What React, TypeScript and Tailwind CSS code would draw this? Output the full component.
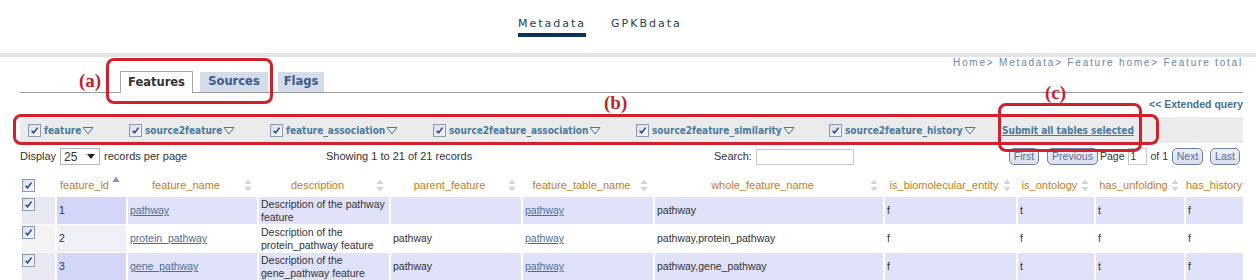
import React from "react";

const Check = () => (
  <span className="inline-flex h-[13px] w-[13px] shrink-0 items-center justify-center border border-[#8d9ab2] bg-linear-to-br from-[#d6ddec] to-[#f8f9fc]">
    <svg viewBox="0 0 10 10" className="h-[9px] w-[9px]">
      <path d="M1.8 5.2 L4 7.6 L8.4 1.8" fill="none" stroke="#23417a" strokeWidth="1.7" />
    </svg>
  </span>
);

const Tri = () => (
  <svg viewBox="0 0 12 9" className="ml-[1px] h-[9px] w-[12px]">
    <path d="M1 1.5 H11 L6 8 Z" fill="none" stroke="#4a7a9a" strokeWidth="1" />
  </svg>
);

const SortBoth = () => (
  <svg viewBox="0 0 8 13" className="h-[13px] w-[8px]">
    <path d="M4 0.5 L7.5 5 H0.5 Z" fill="#d3d4d9" />
    <path d="M4 12.5 L7.5 8 H0.5 Z" fill="#d3d4d9" />
  </svg>
);

const SortUp = () => (
  <svg viewBox="0 0 8 13" className="h-[13px] w-[8px]">
    <path d="M4 0.5 L7.5 6 H0.5 Z" fill="#8a90d6" />
  </svg>
);

const tables = [
  "feature",
  "source2feature",
  "feature_association",
  "source2feature_association",
  "source2feature_similarity",
  "source2feature_history",
];

const cols =
  "grid grid-cols-[33px_69px_129px_130px_130px_130px_228px_131px_76px_88px_57px] gap-x-[2px]";

const headers = [
  "feature_name",
  "description",
  "parent_feature",
  "feature_table_name",
  "whole_feature_name",
  "is_biomolecular_entity",
  "is_ontology",
  "has_unfolding",
];

const rows = [
  { id: 1, name: "pathway", desc: ["Description of the pathway", "feature"], parent: "", whole: "pathway", v: ["f", "t", "t", "f"] },
  { id: 2, name: "protein_pathway", desc: ["Description of the", "protein_pathway feature"], parent: "pathway", whole: "pathway,protein_pathway", v: ["f", "f", "f", "f"] },
  { id: 3, name: "gene_pathway", desc: ["Description of the", "gene_pathway feature"], parent: "pathway", whole: "pathway,gene_pathway", v: ["f", "t", "t", "f"] },
];

const Btn = ({ children, w }: { children: React.ReactNode; w: string }) => (
  <span className={`flex h-[17px] shrink-0 items-center justify-center rounded-[5px] border border-[#6f80a6] bg-linear-to-b from-[#eef1f8] to-[#d9dfee] text-[#5c6d95] ${w}`}>
    {children}
  </span>
);

export default function App() {
  return (
    <div className="relative h-[280px] w-[1260px] overflow-hidden bg-white font-['Liberation_Sans',Arial,sans-serif] text-[#333]">
      {/* top nav */}
      <div className="flex h-[53px] gap-[25px] pl-[518px] pt-[17px] font-['DejaVu_Sans',sans-serif] text-[11px] leading-[14px] tracking-[2px] text-[#22405f]">
        <div className="flex flex-col">
          <span>Metadata</span>
          <span className="mt-[2px] h-[4px] w-full bg-[#0f3358]" />
        </div>
        <span>GPKBdata</span>
      </div>
      <div className="h-[4px] w-[1256px] bg-[#e5e5e5]" />

      <div className="ml-[20px] w-[1223px]">
        <div className="text-right text-[10px] leading-[12px] tracking-[1.8px] text-[#6688a8]">
          Home&gt; Metadata&gt; Feature home&gt; Feature total
        </div>

        {/* tabs */}
        <div className="mt-[2px] flex h-[22px] items-end border-b border-[#9a9a9a] pl-[100px] font-['DejaVu_Sans',sans-serif] text-[11.5px] font-bold">
          <span className="-mb-px flex h-[22px] w-[73px] items-center justify-center border border-b-0 border-[#aaa] bg-white text-[#333]">
            Features
          </span>
          <span className="ml-[7px] flex h-[20px] w-[68px] items-center justify-center bg-[#d4dbe9] text-[#3b5a8e]">
            Sources
          </span>
          <span className="ml-[10px] flex h-[20px] w-[46px] items-center justify-center bg-[#d4dbe9] text-[#3b5a8e]">
            Flags
          </span>
        </div>

        <div className="flex h-[24px] items-center justify-end text-[10.5px] font-bold text-[#4b7090]">
          &lt;&lt; Extended query
        </div>

        {/* table selection band */}
        <div className="grid h-[26px] grid-cols-[101px_141px_163px_203px_193px_173px_auto] items-center bg-[#ebebeb] pl-[8px] font-['DejaVu_Sans_Condensed','DejaVu_Sans',sans-serif] text-[10px] font-bold text-[#4a7a9a]">
          {tables.map((t) => (
            <div key={t} className="flex items-center">
              <Check />
              <span className="ml-[3px]">{t}</span>
              <Tri />
            </div>
          ))}
          <span className="underline">Submit all tables selected</span>
        </div>

        {/* display row */}
        <div className="mt-[4px] flex h-[19px] items-center whitespace-nowrap text-[11px]">
          <div className="flex w-[306px] items-center">
            <span>Display</span>
            <span className="ml-[4px] flex h-[17px] w-[40px] items-center justify-between border border-[#b5b5b5] pl-[3px] pr-[4px] text-[12px]">
              25
              <svg viewBox="0 0 8 5" className="h-[5px] w-[8px]">
                <path d="M0 0 H8 L4 5 Z" fill="#222" />
              </svg>
            </span>
            <span className="ml-[4px]">records per page</span>
          </div>
          <div className="w-[388px]">Showing 1 to 21 of 21 records</div>
          <div className="flex w-[295px] items-center">
            <span>Search:</span>
            <span className="ml-[4px] h-[16px] w-[98px] border border-[#c8c8c8]" />
          </div>
          <div className="flex items-center text-[10.5px]">
            <Btn w="w-[30px]">First</Btn>
            <span className="ml-[8px]">
              <Btn w="w-[51px]">Previous</Btn>
            </span>
            <span className="ml-[2px]">Page</span>
            <span className="ml-[3px] h-[17px] w-[19px] border border-[#c8c8c8] pl-[2px] text-[10px] leading-[15px]">1</span>
            <span className="ml-[4px]">of 1</span>
            <span className="ml-[4px]">
              <Btn w="w-[31px]">Next</Btn>
            </span>
            <span className="ml-[7px]">
              <Btn w="w-[30px]">Last</Btn>
            </span>
          </div>
        </div>

        {/* table */}
        <div className="mt-[9px] pl-[2px]">
          <div className={`${cols} h-[20px] items-center text-[11px] text-[#c47d1f]`}>
            <div className="flex items-center">
              <Check />
            </div>
            <div className="flex items-center">
              <span className="flex-1 text-center">feature_id</span>
              <span className="-mt-[5px] mr-[6px]">
                <SortUp />
              </span>
            </div>
            {headers.map((h) => (
              <div key={h} className="flex items-center">
                <span className="flex-1 text-center whitespace-nowrap">{h}</span>
                <span className="mr-[5px]">
                  <SortBoth />
                </span>
              </div>
            ))}
            <div className="overflow-hidden whitespace-nowrap">has_history</div>
          </div>

          <div className="mt-[2px] flex flex-col gap-y-[1px] text-[10.5px] leading-[12.5px]">
            {rows.map((r, i) => {
              const odd = i % 2 === 0;
              const bg = odd ? "bg-[#e0e2fa]" : "bg-white";
              const cell = `flex items-center pl-[2px] ${bg}`;
              return (
                <div key={r.id} className={`${cols} h-[27px]`}>
                  <div className={`pt-[1px] ${odd ? "bg-[#e8e8f3]" : "bg-[#f3f3f5]"}`}>
                    <Check />
                  </div>
                  <div className={`flex items-center pl-[2px] ${odd ? "bg-[#d3d6f7]" : "bg-[#efeff8]"}`}>{r.id}</div>
                  <div className={cell}>
                    <span className="text-[#4c6e96] underline">{r.name}</span>
                  </div>
                  <div className={`${cell} flex-col !items-start justify-center`}>
                    <span>{r.desc[0]}</span>
                    <span>{r.desc[1]}</span>
                  </div>
                  <div className={cell}>{r.parent}</div>
                  <div className={cell}>
                    <span className="text-[#4c6e96] underline">pathway</span>
                  </div>
                  <div className={cell}>{r.whole}</div>
                  {r.v.map((v, k) => (
                    <div key={k} className={cell}>
                      {v}
                    </div>
                  ))}
                </div>
              );
            })}
          </div>
        </div>
      </div>

      {/* annotations */}
      <div className="absolute left-[106px] top-[58px] h-[46px] w-[167px] rounded-[8px] border-[3px] border-[#d2202e]" />
      <div className="absolute left-[13px] top-[114px] h-[31px] w-[1146px] rounded-[8px] border-[3px] border-[#d2202e]" />
      <div className="absolute left-[998px] top-[103px] h-[49px] w-[144px] rounded-[8px] border-[3px] border-[#d2202e]" />
      <span className="absolute left-[79px] top-[70px] font-['Liberation_Serif',serif] text-[19px] font-bold leading-[22px] text-[#c3242b]">(a)</span>
      <span className="absolute left-[604px] top-[92px] font-['Liberation_Serif',serif] text-[19px] font-bold leading-[22px] text-[#c3242b]">(b)</span>
      <span className="absolute left-[1045px] top-[82px] font-['Liberation_Serif',serif] text-[19px] font-bold leading-[22px] text-[#c3242b]">(c)</span>
    </div>
  );
}
